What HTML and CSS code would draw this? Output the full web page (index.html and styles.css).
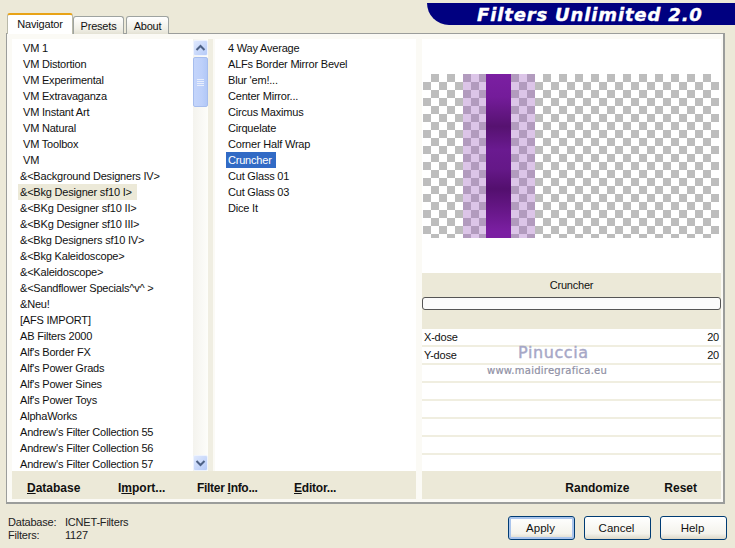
FILE: index.html
```html
<!DOCTYPE html>
<html lang="en">
<head>
<meta charset="utf-8">
<title>Filters Unlimited 2.0</title>
<link rel="stylesheet" href="styles.css">
</head>
<body>
<div class="dialog">
  <header class="top">
    <nav class="tabs">
      <div class="tab active">Navigator</div>
      <div class="tab tab-presets">Presets</div>
      <div class="tab tab-about">About</div>
    </nav>
    <div class="logo">Filters Unlimited 2.0</div>
  </header>
  <main class="panel">
    <div class="columns">
      <section class="left">
        <div class="listwrap first">
          <ul class="list cats">
            <li class="ind">VM 1</li>
            <li class="ind">VM Distortion</li>
            <li class="ind">VM Experimental</li>
            <li class="ind">VM Extravaganza</li>
            <li class="ind">VM Instant Art</li>
            <li class="ind">VM Natural</li>
            <li class="ind">VM Toolbox</li>
            <li class="ind">VM</li>
            <li>&amp;&lt;Background Designers IV&gt;</li>
            <li class="cat-sel">&amp;&lt;Bkg Designer sf10 I&gt;</li>
            <li>&amp;&lt;BKg Designer sf10 II&gt;</li>
            <li>&amp;&lt;BKg Designer sf10 III&gt;</li>
            <li>&amp;&lt;Bkg Designers sf10 IV&gt;</li>
            <li>&amp;&lt;Bkg Kaleidoscope&gt;</li>
            <li>&amp;&lt;Kaleidoscope&gt;</li>
            <li>&amp;&lt;Sandflower Specials^v^ &gt;</li>
            <li>&amp;Neu!</li>
            <li>[AFS IMPORT]</li>
            <li>AB Filters 2000</li>
            <li>Alf's Border FX</li>
            <li>Alf's Power Grads</li>
            <li>Alf's Power Sines</li>
            <li>Alf's Power Toys</li>
            <li>AlphaWorks</li>
            <li>Andrew's Filter Collection 55</li>
            <li>Andrew's Filter Collection 56</li>
            <li>Andrew's Filter Collection 57</li>
          </ul>
          <div class="scrollbar">
            <div class="sbtn"><svg width="11" height="8" viewBox="0 0 11 8"><path d="M1.500 6 5.500 2 9.500 6" fill="none" stroke="#4d6185" stroke-width="2"/></svg></div>
            <div class="thumb"><span></span><span></span><span></span><span></span></div>
            <div class="track"></div>
            <div class="sbtn"><svg width="11" height="8" viewBox="0 0 11 8"><path d="M1.500 2 5.500 6 9.500 2" fill="none" stroke="#4d6185" stroke-width="2"/></svg></div>
          </div>
        </div>
        <div class="listwrap mid">
          <ul class="list filters">
            <li>4 Way Average</li>
            <li>ALFs Border Mirror Bevel</li>
            <li>Blur 'em!...</li>
            <li>Center Mirror...</li>
            <li>Circus Maximus</li>
            <li>Cirquelate</li>
            <li>Corner Half Wrap</li>
            <li class="fil-sel">Cruncher</li>
            <li>Cut Glass 01</li>
            <li>Cut Glass 03</li>
            <li>Dice It</li>
          </ul>
        </div>
        <div class="actions">
          <span class="act act-db"><u>D</u>atabase</span>
          <span class="act act-im">I<u>m</u>port...</span>
          <span class="act act-fi">Filter <u>I</u>nfo...</span>
          <span class="act act-ed"><u>E</u>ditor...</span>
        </div>
      </section>
      <section class="right">
        <div class="preview">
          <div class="checker">
            <div class="band-light"></div>
            <div class="band-solid"></div>
            <div class="band-light alt"></div>
          </div>
        </div>
        <div class="fname">Cruncher</div>
        <div class="slider"></div>
        <div class="params">
          <div class="row"><span>X-dose</span><span>20</span></div>
          <div class="row"><span>Y-dose</span><span>20</span></div>
          <div class="row"></div>
          <div class="row"></div>
          <div class="row"></div>
          <div class="row"></div>
          <div class="row"></div>
          <div class="row"></div>
          <div class="mark">
            <div class="mark-name">Pinuccia</div>
            <div class="mark-url">www.maidiregrafica.eu</div>
          </div>
        </div>
        <div class="actions2">
          <span class="act">Randomize</span>
          <span class="act">Reset</span>
        </div>
      </section>
    </div>
  </main>
  <footer class="foot">
    <dl class="stats">
      <dt>Database:</dt><dd>ICNET-Filters</dd>
      <dt>Filters:</dt><dd>1127</dd>
    </dl>
    <div class="buttons">
      <button class="btn default">Apply</button>
      <button class="btn">Cancel</button>
      <button class="btn">Help</button>
    </div>
  </footer>
</div>
</body>
</html>
```
FILE: styles.css
```css
* { box-sizing: border-box; }
html, body { margin: 0; padding: 0; }
body {
  width: 735px; height: 548px; overflow: hidden;
  background: #ece9d8; color: #111;
  font: 11px/16px "Liberation Sans", Arial, sans-serif;
  letter-spacing: -.2px;
}
.dialog { display: flex; flex-direction: column; height: 548px; }

.top { display: flex; justify-content: space-between; height: 33px; padding-left: 7px; align-items: flex-start; }
.tabs { display: flex; align-items: flex-end; height: 34px; position: relative; z-index: 1; }
.tab {
  height: 18px; line-height: 18px; text-align: center;
  border: 1px solid #9ea3a0; border-bottom: 0; border-radius: 3px 3px 0 0;
  background: linear-gradient(#fff, #f0efe6 70%, #e4e2d4);
}
.tab-presets { width: 51px; }
.tab-about { width: 43px; margin-left: 2px; }
.tab.active {
  height: 21px; width: 66px; padding-top: 1px; line-height: 16px;
  background: #fff; border: 1px solid #b9b9a9; border-top: 2px solid #e8a317; border-bottom: 0;
}
.logo {
  margin-top: 3px; width: 308px; height: 22px; padding-left: 50px;
  background: #000080; border-radius: 0 0 0 22px / 0 0 0 22px;
  color: #fff; font: italic bold 18px/23px "DejaVu Sans", sans-serif; letter-spacing: .85px;
  -webkit-text-stroke: .4px #fff;
  white-space: nowrap; overflow: hidden;
}

.panel {
  margin: 0 10px 0 6px; height: 471px; padding: 5px 2px 3px 5px;
  background: #fbfaf5;
  border: 1px solid #9b9d9b; border-right-width: 2px; border-bottom-width: 2px;
}
.columns { display: flex; gap: 6px; height: 100%; }
.left {
  width: 404px; display: grid;
  grid-template-columns: 201px 201px; grid-template-rows: 432px 28px; column-gap: 2px;
}
.listwrap { background: #fff; display: flex; overflow: hidden; }
.listwrap.first { border-right: 5px solid #f0eee2; }
.list { list-style: none; margin: 0; padding: 1px 0 0; flex: 1; min-width: 0; }
.list li { height: 16px; white-space: nowrap; }
.cats li { padding-left: 8px; }
.cats li.ind { padding-left: 11px; }
.cats li.cat-sel { background: #ece9d8; width: 119px; margin-left: 6px; padding-left: 2px; }
.filters li { padding-left: 13px; }
.filters li.fil-sel { background: #316ac5; color: #fff; width: 50px; margin-left: 11px; padding-left: 2px; }
.scrollbar {
  width: 15px; display: flex; flex-direction: column; padding-top: 1px;
  background: linear-gradient(90deg, #f4f3ee, #fdfdfa);
}
.sbtn {
  height: 16px; flex: none; display: flex; align-items: center; justify-content: center;
  background: linear-gradient(135deg, #dfe8fd, #b6cbf8);
  border: 1px solid #eef3fe; border-radius: 2px;
}
.thumb {
  height: 50px; flex: none; margin-top: 1px; display: flex; flex-direction: column; align-items: center; justify-content: center; gap: 1px;
  background: linear-gradient(90deg, #c4d5fb, #bdd0fa 60%, #b2c8f7);
  border: 1px solid #a6bdee; border-radius: 2px;
}
.thumb span { width: 7px; height: 1px; background: #e8eefc; }
.track { flex: 1; }
.actions {
  grid-column: 1 / 3; background: #ece9d8; display: flex; align-items: center;
  padding: 6px 0 0 15px;
}
.act { font-size: 12px; font-weight: 700; letter-spacing: 0; white-space: nowrap; }
.act-db { width: 91px; }
.act-im { width: 79px; }
.act-fi { width: 97px; letter-spacing: -.3px; }
.act-ed { letter-spacing: -.2px; }

.right { width: 299px; display: flex; flex-direction: column; }
.preview { height: 234px; background: #fff; padding: 35px 2px 0 1px; }
.checker {
  height: 164px; width: 296px; display: flex; padding-left: 40px;
  background: repeating-conic-gradient(#bdbdbd 0 25%, #fff 0 50%) 0 0 / 16px 16px;
}
.band-light { width: 23px; background: rgba(158, 94, 190, .36); }
.band-light.alt { width: 24px; }
.band-solid {
  width: 25px;
  background: linear-gradient(#7b1fa2, #741c9a 14%, #561270 32%, #6a1a90 46%, #651888 58%, #530f6e 70%, #7b1fa2 96%);
}
.fname { height: 24px; background: #ece9d8; text-align: center; line-height: 24px; }
.slider { height: 32px; background: #ece9d8; }
.slider::before {
  content: ""; display: block; height: 11px; background: #fbfbfb;
  border: 1px solid #555; border-radius: 3px;
}
.params { position: relative; height: 142px; display: flex; flex-direction: column; gap: 2px; background: #f0eee0; }
.row { height: 16px; background: #fff; display: flex; justify-content: space-between; padding: 0 2px; line-height: 16px; }
.mark { position: absolute; left: 65px; top: 14px; color: #a6a7c6; }
.mark-name { font: 400 16px/20px "DejaVu Sans", sans-serif; letter-spacing: .6px; margin-left: 31px; -webkit-text-stroke: .4px #a6a7c6; }
.mark-url { font: 400 10px/13px "DejaVu Sans", sans-serif; color: #8f90a4; margin-top: 1px; white-space: nowrap; letter-spacing: .25px; -webkit-text-stroke: .2px #8f90a4; }
.actions2 {
  height: 28px; background: #ece9d8; display: flex; justify-content: flex-end; align-items: center;
  gap: 35px; padding: 6px 24px 0 0;
}

.foot { flex: 1; display: flex; justify-content: space-between; padding: 12px 8px 0 8px; color: #222; }
.stats {
  margin: 0; display: grid; grid-template-columns: 57px auto; grid-auto-rows: 13px; align-content: start;
}
.stats dd { margin: 0; }
.stats dt, .stats dd { line-height: 13px; }
.buttons { display: flex; gap: 9px; }
.btn {
  width: 67px; height: 24px; padding: 0 2px 0 0; margin: 0;
  font: 11.500px "Liberation Sans", Arial, sans-serif; color: #111;
  background: linear-gradient(#fff, #f4f3ec 75%, #dcd8c8);
  border: 1px solid #003c74; border-radius: 3px;
}
.btn.default { box-shadow: inset 0 0 0 2px #a9c4ec; }
```
